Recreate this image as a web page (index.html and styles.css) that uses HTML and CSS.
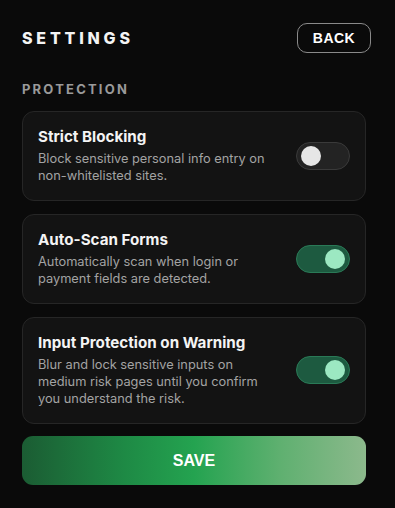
FILE: index.html
```html
<!DOCTYPE html>
<html>
<head>
<meta charset="utf-8">
<link rel="stylesheet" href="styles.css">
</head>
<body>
<div class="page">
  <header class="header">
    <h1 class="title">SETTINGS</h1>
    <button class="back">BACK</button>
  </header>
  <div class="section">PROTECTION</div>
  <div class="cards">
    <div class="card">
      <div class="text">
        <div class="card-title">Strict Blocking</div>
        <div class="card-desc">Block sensitive personal info entry on non-whitelisted sites.</div>
      </div>
      <div class="toggle"><span class="knob"></span></div>
    </div>
    <div class="card">
      <div class="text">
        <div class="card-title">Auto-Scan Forms</div>
        <div class="card-desc">Automatically scan when login or payment fields are detected.</div>
      </div>
      <div class="toggle on"><span class="knob"></span></div>
    </div>
    <div class="card">
      <div class="text">
        <div class="card-title">Input Protection on Warning</div>
        <div class="card-desc">Blur and lock sensitive inputs on medium risk pages until you confirm you understand the risk.</div>
      </div>
      <div class="toggle on"><span class="knob"></span></div>
    </div>
  </div>
  <button class="save">SAVE</button>
</div>
</body>
</html>
```
FILE: styles.css
```css
html, body {
  margin: 0;
  padding: 0;
  background: #0a0a0a;
}
body {
  font-family: "Inter", "Lato", sans-serif;
  color: #f2f2f2;
}
.page {
  padding: 23px 29px 0 22px;
  display: flex;
  flex-direction: column;
}
.header {
  display: flex;
  justify-content: space-between;
  align-items: center;
  height: 30px;
}
.title {
  margin: 0;
  font-size: 16px;
  font-weight: 800;
  letter-spacing: 3.8px;
  color: #f4f4f4;
}
.back {
  width: 74px;
  height: 30px;
  margin-right: -5px;
  background: transparent;
  border: 1px solid #8a8a8a;
  border-radius: 10px;
  color: #ffffff;
  font-family: "Liberation Sans", Arial, sans-serif;
  font-weight: 700;
  font-size: 14px;
  letter-spacing: 0.5px;
  padding: 0;
}
.section {
  margin-top: 28px;
  font-size: 13px;
  font-weight: 700;
  letter-spacing: 2.2px;
  color: #9a9a9a;
  line-height: 16px;
}
.cards {
  margin-top: 14px;
  display: flex;
  flex-direction: column;
  gap: 13px;
}
.card {
  background: #131313;
  border: 1px solid #262626;
  border-radius: 12px;
  padding: 15px 15px 16px 15px;
  display: flex;
  align-items: center;
  justify-content: space-between;
  gap: 12px;
}
.text {
  flex: 1;
  min-width: 0;
}
.card-title {
  font-size: 15.2px;
  font-weight: 700;
  color: #f4f4f4;
  line-height: 20px;
}
.card-desc {
  margin-top: 3px;
  font-size: 12.8px;
  line-height: 17px;
  color: #a3a3a3;
  max-width: 230px;
}
.toggle {
  flex: none;
  width: 54px;
  height: 28px;
  box-sizing: border-box;
  border-radius: 14px;
  background: #232323;
  border: 1px solid #3a3a3a;
  display: flex;
  align-items: center;
  padding: 0 4px;
}
.knob {
  width: 20px;
  height: 20px;
  border-radius: 50%;
  background: #e6e6e6;
}
.toggle.on {
  background: #1d5a40;
  border-color: #2a7a57;
  justify-content: flex-end;
}
.toggle.on .knob {
  background: #9ce8c2;
}
.save {
  margin-top: 12px;
  height: 49px;
  border: none;
  border-radius: 11px;
  background: linear-gradient(90deg, #1b5c33 0%, #1e8a45 30%, #24a350 50%, #5fb070 75%, #8cb98c 100%);
  color: #ffffff;
  font-family: "Liberation Sans", Arial, sans-serif;
  font-weight: 700;
  font-size: 16px;
  padding: 0;
}
```
